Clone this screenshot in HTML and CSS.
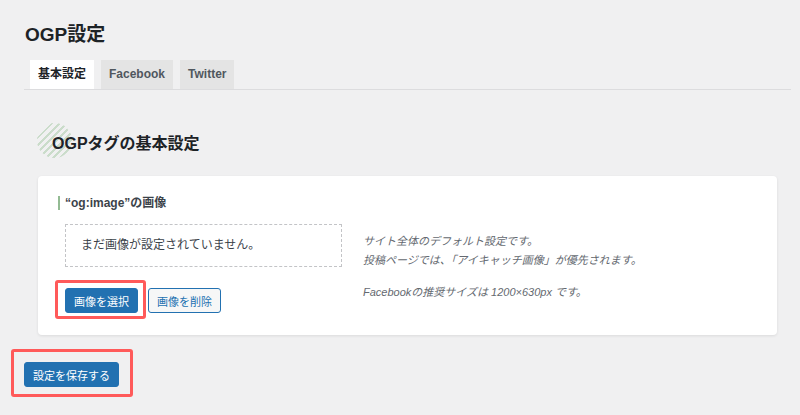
FILE: index.html
```html
<!DOCTYPE html>
<html lang="ja">
<head>
    <meta charset="UTF-8">
    <meta name="viewport" content="width=device-width, initial-scale=1.0">
    <title>OGP設定</title>
    <link rel="stylesheet" href="styles.css">
</head>
<body>
    <div class="wrap">
        <h1 class="page-title">OGP設定</h1>

        <nav class="tabs">
            <a class="tab is-active">基本設定</a>
            <a class="tab">Facebook</a>
            <a class="tab">Twitter</a>
        </nav>

        <div class="panel">
            <h2 class="section-title">OGPタグの基本設定</h2>

            <div class="card">
                <h3 class="field-label">“og:image”の画像</h3>
                <div class="field">
                    <div class="field-main">
                        <div class="image-preview">まだ画像が設定されていません。</div>
                        <div class="image-actions">
                            <span class="mark mark-select"><button class="btn btn-primary">画像を選択</button></span>
                            <button class="btn btn-secondary">画像を削除</button>
                        </div>
                    </div>
                    <div class="field-help">
                        <p>サイト全体のデフォルト設定です。<br>投稿ページでは、「アイキャッチ画像」が優先されます。</p>
                        <p>Facebookの推奨サイズは 1200×630px です。</p>
                    </div>
                </div>
            </div>
        </div>

        <div class="submit">
            <span class="mark mark-save"><button class="btn btn-primary">設定を保存する</button></span>
        </div>
    </div>
</body>
</html>
```

FILE: styles.css
```css
body { margin: 0; background: #f0f0f1; color: #1d2327; font-family: "Liberation Sans", "Noto Sans CJK JP", sans-serif; }
.wrap { padding: 21px 9px 30px 24px; }
.page-title { margin: 0; padding-left: 1px; font-size: 19px; line-height: 28px; font-weight: 700; }

/* tabs */
.tabs { display: flex; gap: 7px; margin-top: 11px; padding-left: 6px; border-bottom: 1px solid #dcdcde; }
.tab { height: 29px; line-height: 29px; padding: 0 8px; font-size: 12px; font-weight: 700; background: #e4e4e4; color: #50575e; cursor: pointer; }
.tab.is-active { background: #fff; color: #1d2327; }

/* section */
.panel { padding: 33px 14px 0 13px; }
.section-title { position: relative; z-index: 0; display: flex; align-items: center; height: 35px; margin: 0; padding: 2px 0 0 15px; box-sizing: border-box; font-size: 16px; font-weight: 700; }
.section-title::before { content: ""; position: absolute; left: 0; top: 0; width: 35px; height: 35px; border-radius: 50%; z-index: -1;
    background: repeating-linear-gradient(135deg, #cadcca 0 2px, transparent 2px 5px); }

.card { margin: 18px 0 0 1px; padding: 20px; background: #fff; border-radius: 4px; box-shadow: 0 1px 3px rgba(0,0,0,0.09); }
.field-label { margin: 0; padding-left: 5px; border-left: 2px solid #93bb93; font-size: 12px; line-height: 14px; font-weight: 700; color: #3c434a; }
.field { display: flex; gap: 21px; margin-top: 14px; padding-left: 7px; }
.field-main { width: 277px; }
.image-preview { height: 43px; box-sizing: border-box; padding: 0 15px; line-height: 41px; border: 1px dashed #c3c4c7; font-size: 12px; color: #3c434a; }
.image-actions { display: flex; align-items: center; gap: 10px; margin-top: 21px; }
.field-help { padding-top: 8px; font-size: 11px; line-height: 19px; font-style: italic; color: #646970; }
.field-help p { margin: 0 0 13px; }

/* buttons */
.btn { height: 25px; padding: 0 8px; border: 1px solid #2271b1; border-radius: 3px; font-family: inherit; font-size: 11px; cursor: pointer; }
.btn-primary { background: #2271b1; color: #fff; }
.btn-secondary { background: #f6f7f7; color: #2271b1; }

.submit { margin-top: 27px; }

/* red annotation frames */
.mark { position: relative; display: inline-flex; }
.mark::after { content: ""; position: absolute; border: 3px solid #ff5a5a; border-radius: 3px; pointer-events: none; }
.mark-select::after { top: -8px; right: -8px; bottom: -6px; left: -10px; }
.mark-save::after { top: -13px; right: -14px; bottom: -10px; left: -13px; }
```
